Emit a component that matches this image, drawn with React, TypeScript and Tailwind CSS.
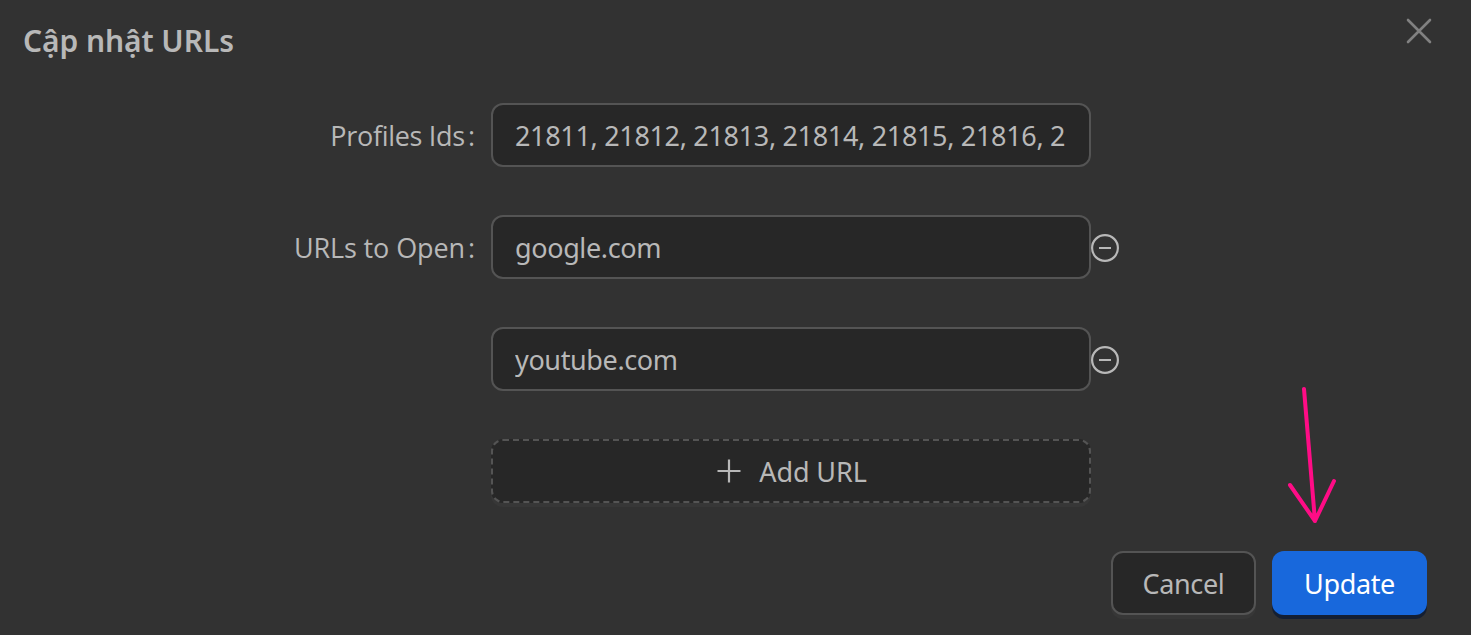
import { useState } from 'react';

const initialUrls = ['google.com', 'youtube.com'];

const profileIds = '21811, 21812, 21813, 21814, 21815, 21816, 21817, 21818';

const inputClass =
  'h-16 w-[600px] rounded-xl border-2 border-[#545454] bg-[#272727] px-[22px] text-[27px] text-[#b8b8b8] outline-none';

function CloseIcon() {
  return (
    <svg width="26" height="26" viewBox="0 0 26 26" fill="none" stroke="#818181" strokeWidth="2.6" strokeLinecap="round">
      <path d="M2 2 24 24M24 2 2 24" />
    </svg>
  );
}

function MinusCircleIcon() {
  return (
    <svg width="28" height="28" viewBox="0 0 28 28" fill="none" stroke="#b8b8b8">
      <circle cx="14" cy="14" r="12.9" strokeWidth="2.2" />
      <path d="M8 14h12" strokeWidth="2" />
    </svg>
  );
}

function PlusIcon() {
  return (
    <svg width="24" height="24" viewBox="0 0 24 24" fill="none" stroke="#b8b8b8" strokeWidth="2.2">
      <path d="M12 0.5v23M0.5 12h23" />
    </svg>
  );
}

function Label({ text, className }: { text: string; className: string }) {
  return (
    <div className="flex w-[491px] justify-end pt-0.5 pr-4 font-['Open_Sans',sans-serif]">
      <span className={className}>{text}</span>
      <span className="ml-[3px]">:</span>
    </div>
  );
}

export default function App() {
  const [urls, setUrls] = useState(initialUrls);

  const handleRemove = (index: number) => {
    setUrls(urls.filter((_, i) => i !== index));
  };

  const handleAdd = () => {
    setUrls([...urls, '']);
  };

  return (
    <div className="relative flex h-[635px] w-[1471px] flex-col overflow-hidden bg-[#323232] font-['Noto_Sans',sans-serif] text-[27px] leading-[44px] text-[#b8b8b8]">
      {/* Header */}
      <div className="flex h-[103px] shrink-0 items-start justify-between pr-[39px] pl-[23px]">
        <h2 className="mt-[19px] text-[30px] font-semibold tracking-[-0.08px]">Cập nhật URLs</h2>
        <button className="mt-[18px]" aria-label="Close">
          <CloseIcon />
        </button>
      </div>

      {/* Form */}
      <div className="flex flex-col gap-12">
        <div className="flex items-center">
          <Label text="Profiles Ids" className="tracking-[-0.3px]" />
          <input className={`${inputClass} tracking-[-0.33px]`} defaultValue={profileIds} />
        </div>
        {urls.map((url, index) => (
          <div key={index} className="flex items-center">
            {index === 0 ? (
              <Label text="URLs to Open" className="tracking-[-0.12px]" />
            ) : (
              <div className="w-[491px]" />
            )}
            <input className={`${inputClass} tracking-[-0.38px]`} defaultValue={url} />
            <button className="pt-0.5" onClick={() => handleRemove(index)} aria-label="Remove">
              <MinusCircleIcon />
            </button>
          </div>
        ))}
        <button
          onClick={handleAdd}
          className="ml-[491px] flex h-16 w-[600px] items-center justify-center gap-[18px] rounded-xl border-2 border-dashed border-[#545454] bg-[#272727] pl-0.5 shadow-[0_4px_0_#373737]"
        >
          <PlusIcon />
          <span className="pt-0.5 tracking-[-0.1px]">Add URL</span>
        </button>
      </div>

      {/* Footer */}
      <div className="mt-12 flex justify-end gap-4 pr-11">
        <button className="h-16 w-[145px] rounded-xl border-2 border-[#545454] bg-[#272727] pt-0.5 shadow-[0_4px_0_#373737]">
          <span className="tracking-[-0.38px]">Cancel</span>
        </button>
        <button className="h-16 w-[155px] rounded-xl bg-[#1868dc] pt-0.5 text-white shadow-[0_4px_0_#141f33]">
          <span className="tracking-[-0.38px]">Update</span>
        </button>
      </div>

      {/* Pointer to the Update button */}
      <svg
        className="pointer-events-none absolute top-[385px] left-[1286px]"
        width="52"
        height="142"
        viewBox="0 0 52 142"
        fill="none"
        stroke="#ff0c86"
        strokeWidth="4"
        strokeLinecap="round"
        strokeLinejoin="round"
      >
        <path d="M18 4 29 136M4 100 29 136 48 96" />
      </svg>
    </div>
  );
}
